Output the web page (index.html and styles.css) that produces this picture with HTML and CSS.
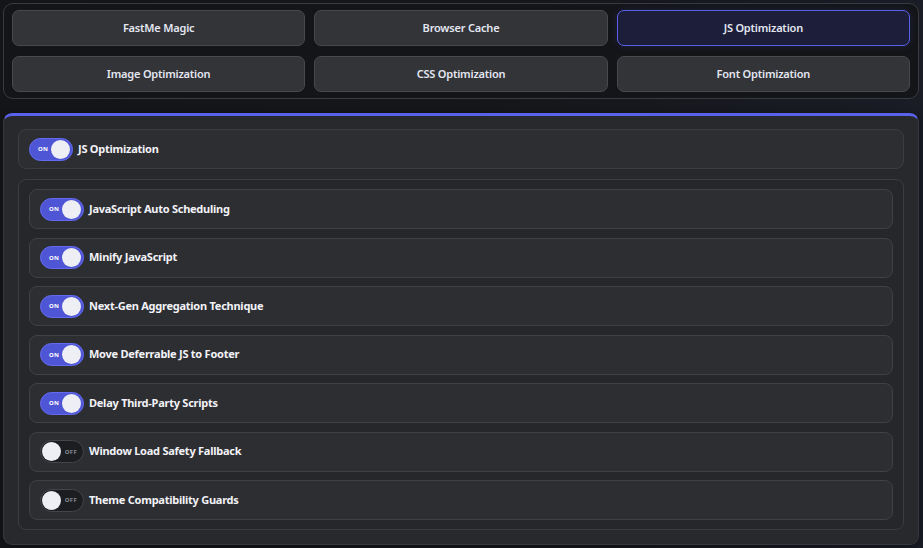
FILE: index.html
```html
<!DOCTYPE html>
<html lang="en">
<head>
  <meta charset="UTF-8" />
  <title>FastMe - JS Optimization</title>
  <link rel="stylesheet" href="styles.css">
</head>
<body>
  <nav class="tabs">
    <button class="tab">FastMe Magic</button>
    <button class="tab">Browser Cache</button>
    <button class="tab active">JS Optimization</button>
    <button class="tab">Image Optimization</button>
    <button class="tab">CSS Optimization</button>
    <button class="tab">Font Optimization</button>
  </nav>

  <section class="panel">
    <div class="row master">
      <label class="switch on"><span class="state">ON</span><span class="knob"></span></label>
      <span class="label">JS Optimization</span>
    </div>

    <div class="group">
      <div class="row">
        <label class="switch on"><span class="state">ON</span><span class="knob"></span></label>
        <span class="label">JavaScript Auto Scheduling</span>
      </div>
      <div class="row">
        <label class="switch on"><span class="state">ON</span><span class="knob"></span></label>
        <span class="label">Minify JavaScript</span>
      </div>
      <div class="row">
        <label class="switch on"><span class="state">ON</span><span class="knob"></span></label>
        <span class="label">Next-Gen Aggregation Technique</span>
      </div>
      <div class="row">
        <label class="switch on"><span class="state">ON</span><span class="knob"></span></label>
        <span class="label">Move Deferrable JS to Footer</span>
      </div>
      <div class="row">
        <label class="switch on"><span class="state">ON</span><span class="knob"></span></label>
        <span class="label">Delay Third-Party Scripts</span>
      </div>
      <div class="row">
        <label class="switch off"><span class="knob"></span><span class="state">OFF</span></label>
        <span class="label">Window Load Safety Fallback</span>
      </div>
      <div class="row">
        <label class="switch off"><span class="knob"></span><span class="state">OFF</span></label>
        <span class="label">Theme Compatibility Guards</span>
      </div>
    </div>
  </section>
</body>
</html>
```

FILE: styles.css
```css
body {
  font-family: 'Noto Sans', sans-serif;
  background: linear-gradient(90deg, #141518 0%, #16171b 60%, #1a1c26 100%);
  color: #eef0f6;
  margin: 0;
  padding: 3px 4px 0 3px;
  height: 548px;
  box-sizing: border-box;
  overflow: hidden;
}

/* tab bar */
.tabs {
  display: grid;
  grid-template-columns: repeat(3, 1fr);
  gap: 9px;
  padding: 6px 8px;
  background: #141518;
  border: 1px solid #3a3b40;
  border-radius: 10px;
  height: 96px;
  box-sizing: border-box;
}

.tab {
  font-family: inherit;
  font-size: 11px;
  font-weight: 600;
  letter-spacing: -0.2px;
  color: #e4e7f2;
  background: #333438;
  border: 1px solid #48494e;
  border-radius: 7px;
  height: 36px;
  padding-bottom: 2px;
  cursor: pointer;
}

.tab.active {
  background: #1d1f3a;
  border-color: #5a60ea;
  box-shadow: 0 0 10px rgba(90, 96, 234, 0.15);
}

/* main panel */
.panel {
  margin-top: 14px;
  background: #28292d;
  border: 1px solid #37383d;
  border-top: 3px solid #5962ea;
  border-radius: 9px;
  padding: 13px 14px 12px;
  height: 432px;
  box-sizing: border-box;
  box-shadow: 0 2px 8px rgba(0, 0, 0, 0.35);
}

.row {
  display: flex;
  align-items: center;
  gap: 5px;
  height: 40px;
  padding: 0 10px;
  background: #2d2e32;
  border: 1px solid #404146;
  border-radius: 8px;
  box-sizing: border-box;
}

.row.master {
  border-color: #3c3d42;
}

.group {
  margin-top: 10px;
  display: flex;
  flex-direction: column;
  gap: 8.5px;
  padding: 9px 10px;
  border: 1px solid #3c3d42;
  border-radius: 8px;
  background: #26272b;
}

.label {
  font-size: 11px;
  font-weight: 700;
  letter-spacing: -0.25px;
  color: #f2f3f8;
  margin-top: -2px;
}

/* toggle switch */
.switch {
  display: flex;
  align-items: center;
  justify-content: space-between;
  width: 44px;
  height: 23px;
  padding: 0 2px 0 8px;
  border-radius: 12px;
  box-sizing: border-box;
  flex-shrink: 0;
}

.switch.on {
  background: #4f56d6;
  border: 1px solid #646bf0;
}

.switch.off {
  background: #1c1d21;
  border: 1px solid #45464b;
  padding: 0 6px 0 1px;
}

.knob {
  width: 19px;
  height: 19px;
  border-radius: 50%;
  background: #eeeff4;
}

.state {
  font-size: 6px;
  font-weight: 700;
  letter-spacing: 0.3px;
  color: #ffffff;
}

.switch.off .state {
  color: #8a8b92;
}
```
